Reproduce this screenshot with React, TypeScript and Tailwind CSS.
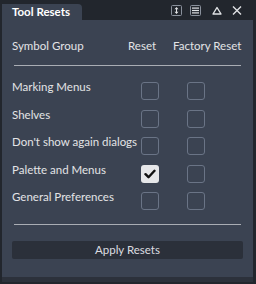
import React from 'react'

const rows = [
  { label: 'Marking Menus', reset: false },
  { label: 'Shelves', reset: false },
  { label: "Don't show again dialogs", reset: false },
  { label: 'Palette and Menus', reset: true },
  { label: 'General Preferences', reset: false },
]

function Box({ checked }: { checked?: boolean }) {
  if (checked) {
    return (
      <div className="w-[18px] h-[18px] rounded-[3px] bg-[#e6e7e9] flex items-center justify-center">
        <svg width="12" height="10" viewBox="0 0 12 10">
          <path d="M1.5 5.2 L4.5 8.2 L10.5 1.8" fill="none" stroke="#111" strokeWidth="2.4" strokeLinecap="round" strokeLinejoin="round" />
        </svg>
      </div>
    )
  }
  return <div className="w-[18px] h-[18px] rounded-[3px] border border-[#6a7486]" />
}

export default function App() {
  return (
    <div className="w-[256px] h-[284px] bg-[#22262d] flex flex-col text-[#e3e4e6] text-[11.5px]" style={{ fontFamily: 'Lato, "Noto Sans", sans-serif' }}>
      {/* title bar */}
      <div className="h-[20px] flex items-end justify-between pl-[2px] pr-[14px] shrink-0">
        <div className="h-[16px] w-[80px] bg-[#3b4352] rounded-tr-[4px] flex items-center pl-[10px] font-bold text-white text-[11.5px]">
          Tool Resets
        </div>
        <div className="flex items-center self-center mt-[1px]">
          <svg width="11" height="11" viewBox="0 0 11 11">
            <rect x="0.5" y="0.5" width="10" height="10" rx="1" fill="none" stroke="#8a919c" />
            <path d="M5.5 2 L7.5 4.2 H3.5 Z M5.5 9 L7.5 6.8 H3.5 Z" fill="#e0e2e5" />
            <rect x="5" y="3.5" width="1" height="4" fill="#e0e2e5" />
          </svg>
          <svg width="11" height="11" viewBox="0 0 11 11" className="ml-[8px]">
            <rect x="0.5" y="0.5" width="10" height="10" rx="1" fill="none" stroke="#8a919c" />
            <rect x="2" y="2.5" width="7" height="1.2" fill="#e0e2e5" />
            <rect x="2" y="4.9" width="7" height="1.2" fill="#e0e2e5" />
            <rect x="2" y="7.3" width="7" height="1.2" fill="#e0e2e5" />
          </svg>
          <svg width="10" height="11" viewBox="0 0 10 11" className="ml-[11px]">
            <path d="M5 2.5 L9 9 H1 Z" fill="none" stroke="#e0e2e5" strokeWidth="1.4" strokeLinejoin="round" />
          </svg>
          <svg width="10" height="11" viewBox="0 0 10 11" className="ml-[10px]">
            <path d="M1 1.5 L9 9.5 M9 1.5 L1 9.5" stroke="#e0e2e5" strokeWidth="1.4" />
          </svg>
        </div>
      </div>

      {/* body */}
      <div className="ml-[2px] mr-[3px] h-[257px] bg-[#3b4352] px-[10px] flex flex-col">
        <div className="flex items-center h-[45px] pt-[6px] whitespace-nowrap">
          <span className="w-[116px]">Symbol Group</span>
          <span className="w-[45px]">Reset</span>
          <span>Factory Reset</span>
        </div>
        <div className="h-px bg-[#a9adb4] mx-[2px]" />
        <div className="flex flex-col pt-[16px] gap-[9.5px]">
          {rows.map((r) => (
            <div key={r.label} className="flex items-center h-[18px]">
              <span className="w-[129px] -mt-[8px] whitespace-nowrap">{r.label}</span>
              <Box checked={r.reset} />
              <div className="w-[28px]" />
              <Box />
            </div>
          ))}
        </div>
        <div className="h-px bg-[#a9adb4] mx-[2px] mt-[14px]" />
        <button className="mt-[16px] h-[18px] rounded-[2px] bg-[#2b303a] text-[#dcdde0] text-[11.5px] flex items-center justify-center">
          Apply Resets
        </button>
      </div>
      <div className="ml-[2px] mr-[3px] h-[5px] bg-[#2c313b]" />
    </div>
  )
}
